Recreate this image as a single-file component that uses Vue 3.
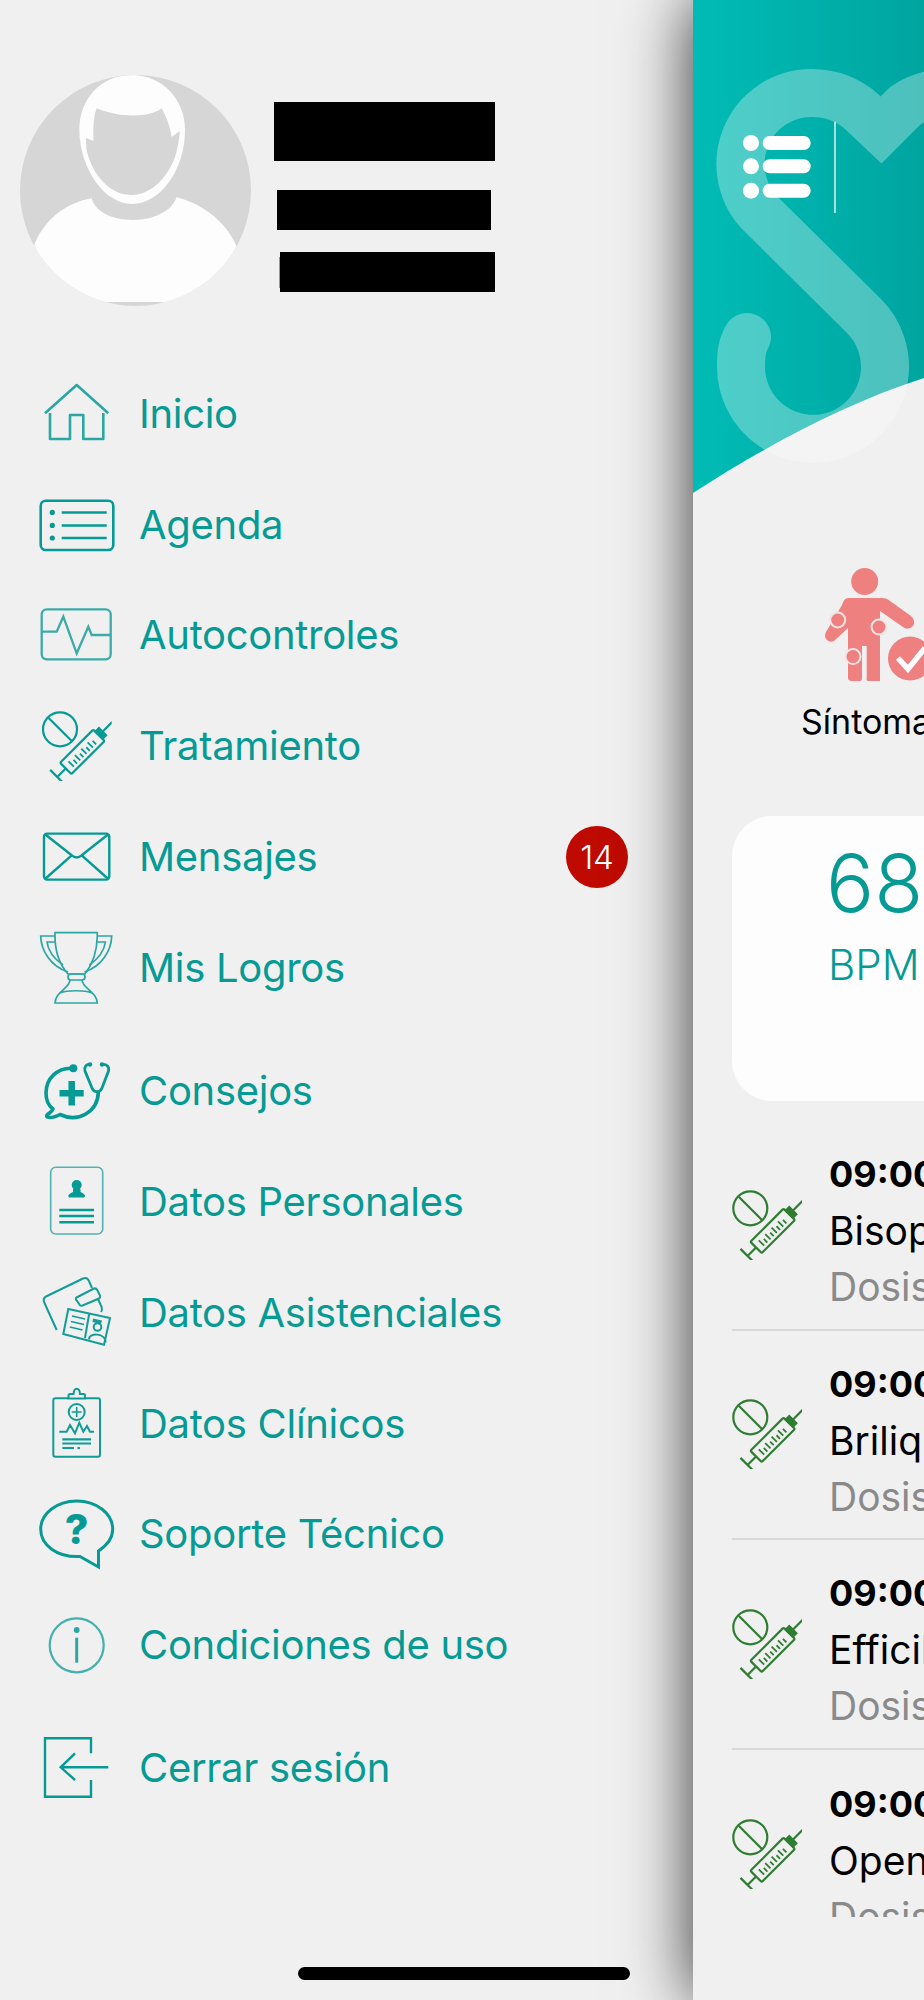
<script setup>
const menu = [
  { id: 'home', label: 'Inicio' },
  { id: 'agenda', label: 'Agenda' },
  { id: 'pulse', label: 'Autocontroles' },
  { id: 'syringe', label: 'Tratamiento' },
  { id: 'mail', label: 'Mensajes', badge: 14 },
  { id: 'trophy', label: 'Mis Logros' },
  { id: 'advice', label: 'Consejos', gap: true },
  { id: 'person', label: 'Datos Personales' },
  { id: 'wallet', label: 'Datos Asistenciales' },
  { id: 'clinic', label: 'Datos Clínicos' },
  { id: 'help', label: 'Soporte Técnico' },
  { id: 'info', label: 'Condiciones de uso' },
  { id: 'logout', label: 'Cerrar sesión', gap: true }
]
const meds = [
  { time: '09:00', name: 'Bisoprolol' },
  { time: '09:00', name: 'Brilique' },
  { time: '09:00', name: 'Efficib' },
  { time: '09:00', name: 'Openvas' }
]
</script>

<template>
  <svg class="defs" aria-hidden="true">
    <symbol id="i-syringe" viewBox="0 0 70 70">
      <g fill="none" stroke="currentColor" stroke-width="2.2">
        <circle cx="18.3" cy="18.3" r="17" />
        <path d="M6.7 6.7L30 30" />
        <g transform="translate(41 40.5) rotate(-45)">
          <rect x="-24" y="-8" width="47" height="16" rx="1.5" />
          <path d="M-24 0H-36M-36 -10V10M28 0H42" />
          <rect x="23" y="-5" width="5" height="10" fill="currentColor" />
          <path stroke-width="1.8" d="M-17 4.5V-3M-12.5 4.5V-0.5M-8 4.5V-3M-3.500 4.500V-0.500M1 4.5V-3M5.500 4.500V-0.500M10 4.5V-3M14.500 4.500V-0.500" />
        </g>
      </g>
    </symbol>
    <symbol id="i-home" viewBox="0 0 90 90">
      <path fill="none" stroke="#2ba7a3" stroke-width="2.600" stroke-linejoin="round" d="M13 45.300L44.700 17L76.300 45.300M18 45V71H38V47H51.300V71H71.300V45" />
    </symbol>
    <symbol id="i-agenda" viewBox="0 0 90 90">
      <rect x="8.700" y="21.700" width="72.600" height="49.300" rx="5" fill="none" stroke="#069a95" stroke-width="2.600" />
      <circle cx="20.300" cy="33.400" r="2.600" fill="#069a95" />
      <circle cx="20.300" cy="46.400" r="2.600" fill="#069a95" />
      <circle cx="20.300" cy="59" r="2.600" fill="#069a95" />
      <path stroke="#069a95" stroke-width="2.500" d="M29.700 33.400H74.700M29.700 46.400H74.700M29.700 59H74.700" />
    </symbol>
    <symbol id="i-pulse" viewBox="0 0 90 90">
      <g fill="none" stroke="#3aaba7" stroke-width="2.300">
        <rect x="9.700" y="19.300" width="69" height="50" rx="5" />
        <path d="M9.700 41.700H24.700L31.300 26.700L44.700 63.300L56.300 36.700L59.700 45H78.700" />
      </g>
    </symbol>
    <symbol id="i-mail" viewBox="0 0 90 90">
      <g fill="none" stroke="#069a95" stroke-width="2.400">
        <rect x="12" y="21.600" width="65.300" height="46" rx="3" />
        <path d="M13 22.300L39.700 43.300Q44.700 47.500 49.700 43.300L76.300 22.300M13 67L39.700 43.300M76.300 67L49.700 43.300" />
      </g>
    </symbol>
    <symbol id="i-trophy" viewBox="0 0 90 90">
      <g fill="none" stroke="#2ba7a3" stroke-width="1.700">
        <path d="M23 14V10.600H65.300V14C65 30 60 43 53 52H36C28 43 23 30 23 14Z" />
        <path d="M23 14H8.700C9 28 18 44 36 50M23 20H15C16 28 21 36 31 43" />
        <path d="M65.300 14H79.700C79.400 28 70.400 44 52.400 50M65.300 20H73.400C72.400 28 67.400 36 57.400 43" />
        <rect x="36" y="52" width="17" height="6" rx="3" />
        <path d="M38 58C38 66 23 70 23 81H65.300C65.300 70 50 66 50 58M28 71C35 68 53 68 60 71" />
      </g>
    </symbol>
    <symbol id="i-advice" viewBox="0 0 90 90">
      <g fill="none" stroke="#069a95">
        <path stroke-width="3.600" stroke-linejoin="round" d="M41.300 22.300C25 21 14 33 14 47C14 54 17 60 21 63C20 66 17 67 15 69C14 71 16 71.500 18 71.500C22 71.500 25 70 28 68.500C46 77 66 66 66.300 46" />
        <path stroke-width="2.800" d="M58 18.500C54 18 52 21 53 25L60 42C62 47 68 47 70 42L76.500 25C77.500 21 75 18 70 18.500" />
      </g>
      <circle cx="41.300" cy="22.300" r="4" fill="#069a95" />
      <circle cx="58" cy="18.500" r="2.200" fill="#069a95" />
      <circle cx="70" cy="18.500" r="2.200" fill="#069a95" />
      <path fill="none" stroke="#069a95" stroke-width="6.500" d="M39.700 35V59.500M27.500 47.300H51.700" />
    </symbol>
    <symbol id="i-person" viewBox="0 0 90 90">
      <rect x="18.700" y="11.300" width="52" height="66.700" rx="5" fill="none" stroke="#4fb3af" stroke-width="1.600" />
      <circle cx="44.700" cy="29" r="5" fill="#069a95" />
      <path fill="#069a95" d="M41 33H48.500V36C50.500 37 53 38 53 40C53 41 52 41.500 51 41.500H38.500C37 41.500 36.300 41 36.300 40C36.300 38 39 37 41 36Z" />
      <path stroke="#069a95" stroke-width="2.400" d="M27.300 54H62M27.300 60H62M27.300 66.300H62" />
    </symbol>
    <symbol id="i-wallet" viewBox="0 0 90 90">
      <g fill="none" stroke="#149d98" stroke-width="2">
        <path d="M24.700 63L12.500 36Q10.300 31.500 14 29.500L51 11.500Q55 10 57 14L60 21M66 32L69.700 40Q70.500 43 69 45" />
        <path d="M44.500 30.500L62 21.500Q64 21 65 22.500L68 28.500Q68.500 30.500 67 31.500L50 38.700Q48 39 47.500 37.500L44 32.500Q43.500 31 44.500 30.500Z" />
        <path d="M36.300 42L78 51L72 77.700L31.300 67ZM57.300 46L53 71" />
        <path stroke-width="1.700" d="M40 49L53 52M39 54.500L52 57.500M37.800 60L50.500 63" />
        <circle cx="65.500" cy="60" r="3.800" />
        <path d="M57 72.500C57 65 74 66 73.500 75.500" />
      </g>
      <path fill="#149d98" d="M61 51.500L70 53.500L69 57L60.500 55Z" />
    </symbol>
    <symbol id="i-clinic" viewBox="0 0 90 90">
      <g fill="none" stroke="#0f9c97" stroke-width="2">
        <path d="M36 20.300H23.500Q21.300 20.300 21.300 22.500V76.500Q21.300 78.700 23.500 78.700H66Q68 78.700 68 76.500V22.500Q68 20.300 66 20.300H53" />
        <path d="M36.500 20.500V17.500Q36.500 16 38 16H41.500C42 9 47.500 9 48 16H51.500Q53 16 53 17.500V20.500H36.500Z" />
        <circle cx="44.700" cy="34" r="8" />
        <path stroke-width="1.600" d="M39.700 34H49.700M44.700 29V39" />
        <path d="M27.300 53.700H34.700L38 47L43 55.300L47.300 44.700L51.300 53.700L55 48L58 53.700H62" />
        <path stroke-width="2.200" d="M30.300 61.300H59M30.300 65.500H59M30.300 70H42M45.500 70H48" />
      </g>
    </symbol>
    <symbol id="i-help" viewBox="0 0 90 90">
      <path fill="none" stroke="#069a95" stroke-width="3" d="M48 67.500L66.500 78V62C74 57 80.700 49 80.700 40.300C80.700 24.600 64.600 12 44.700 12C24.800 12 8.700 24.600 8.700 40.300C8.700 56 24.800 68.500 48 67.500Z" />
    </symbol>
    <symbol id="i-info" viewBox="0 0 90 90">
      <circle cx="44.700" cy="45.300" r="27" fill="none" stroke="#45b0ac" stroke-width="2.200" />
      <circle cx="44.700" cy="30" r="2.900" fill="#2ba7a3" />
      <path stroke="#2ba7a3" stroke-width="3" d="M44.700 37.700V62.700" />
    </symbol>
    <symbol id="i-logout" viewBox="0 0 90 90">
      <path fill="none" stroke="#069a95" stroke-width="2.400" d="M59 30.300V15.300H13V73.700H59V57M76.300 44.300H28.700M43 30.300L28.700 44.300L43 57" />
    </symbol>
  </svg>

  <div class="screen">
    <aside class="drawer">
      <header class="profile">
        <svg class="avatar" viewBox="0 0 231 231">
          <defs>
            <clipPath id="avatar-clip"><circle cx="115.500" cy="115.500" r="115.500" /></clipPath>
          </defs>
          <circle cx="115.500" cy="115.500" r="115.500" fill="#d6d6d6" />
          <g clip-path="url(#avatar-clip)">
            <path fill="#fdfdfd" d="M15 168C25 145 45 128 71.700 123.300C74 135 90 145 113 145C136 145 152 135 156.700 122.300C180 128 205 145 216 170L231 227H0Z" />
            <path fill="#fdfdfd" d="M111.700 0C80 0 59 25 59.300 55C60 95 85 129 112 129C140 129 165 95 165 55C165 25 143 0 111.700 0Z" />
            <path fill="#d6d6d6" d="M76.700 33.300C88 38 100 40.500 113 40.500C126 40.500 136 38 141.700 33.300C146 42 150 50 151.700 62L160 56C159 65 158 72 155 82C147 104 130 120 111.700 120C92 120 76 104 68.500 82C66 75 66 69 66 63L73.500 66C73 52 73.500 42 76.700 33.300Z" />
          </g>
        </svg>
        <div class="redacted">
          <div class="bar bar-one"></div>
          <div class="bar bar-two"></div>
          <div class="bar bar-three"></div>
        </div>
      </header>

      <nav class="menu">
        <div v-for="item in menu" :key="item.id" class="row" :class="{ spaced: item.gap }">
          <svg v-if="item.id === 'syringe'" class="icon syringe-tint" viewBox="0 0 90 90">
            <use href="#i-syringe" x="9.700" y="10" width="70" height="70" />
          </svg>
          <svg v-else class="icon" viewBox="0 0 90 90">
            <use :href="'#i-' + item.id" width="90" height="90" />
            <text v-if="item.id === 'help'" x="44.700" y="55" text-anchor="middle" font-family="Inter, sans-serif" font-weight="800" font-size="41" fill="#069a95">?</text>
          </svg>
          <span class="label">{{ item.label }}</span>
          <span v-if="item.badge" class="badge">{{ item.badge }}</span>
        </div>
      </nav>

      <div class="home-bar"></div>
    </aside>

    <main class="panel">
      <svg class="hero" viewBox="693 0 231 510">
        <defs>
          <linearGradient id="hero-fill" x1="0" y1="0" x2="1" y2="0">
            <stop offset="0" stop-color="#00bcb5" />
            <stop offset="1" stop-color="#00a5a0" />
          </linearGradient>
        </defs>
        <path fill="url(#hero-fill)" d="M693 0H924V378C840 405 760 450 693 493Z" />
        <path fill="none" stroke="#fff" stroke-opacity="0.3" stroke-width="48" stroke-linecap="round" stroke-linejoin="miter"
          d="M747 337C741 347 741 357 741 367A72 72 0 1 0 864 316L762 215A71 71 0 0 1 812 93C831 93 849 100 862 112L881 130L905 106C918 97 935 93 950 93" />
        <circle cx="751" cy="143" r="8" fill="#fff" />
        <circle cx="751" cy="166.300" r="8" fill="#fff" />
        <circle cx="751" cy="190.700" r="8" fill="#fff" />
        <path stroke="#fff" stroke-width="14" stroke-linecap="round" d="M769.700 143H803.700M769.700 166.300H803.700M769.700 190.700H803.700" />
        <path stroke="#fff" stroke-opacity="0.85" stroke-width="1.500" d="M835 121.700V213" />
      </svg>

      <section class="symptoms">
        <svg class="symptom-icon" viewBox="820 565 115 120">
          <g fill="#ee8080">
            <circle cx="864.700" cy="581.500" r="13.500" />
            <path d="M848 598H882Q887 598 890 601L911 616Q916 621 913 626Q908 631 903 627L880 611V681H868Q866 681 866.700 678V646H862V678Q862 681 860 681H852Q848 681 848 678V628L834 641Q829 643 826 639Q824 636 826 632L842 605Q844 598 848 598Z" />
            <circle cx="910" cy="658.500" r="22" />
          </g>
          <g fill="#ee8080" stroke="#f3e4e4" stroke-width="2">
            <circle cx="837.700" cy="620" r="7.500" />
            <circle cx="879" cy="627" r="7.500" />
            <circle cx="853" cy="656.600" r="7.500" />
          </g>
          <path fill="none" stroke="#fff" stroke-width="5.500" d="M898 658L908 669L925 648" />
        </svg>
        <span class="symptom-label">Síntomas</span>
      </section>

      <section class="card">
        <div class="bpm-value">68</div>
        <div class="bpm-unit">BPM</div>
      </section>

      <div class="list">
        <div v-for="(med, i) in meds" :key="i" class="med">
          <svg class="med-icon"><use href="#i-syringe" width="70" height="70" /></svg>
          <div class="med-text">
            <div class="med-time">{{ med.time }}</div>
            <div class="med-name">{{ med.name }}</div>
            <div class="med-dose">Dosis: 1</div>
          </div>
        </div>
      </div>
    </main>
  </div>
</template>

<style>
html, body { margin: 0; background: #f0f0f0; }
</style>

<style scoped>
.defs { position: absolute; width: 0; height: 0; }
.screen {
  display: flex;
  width: 924px;
  height: 2000px;
  overflow: hidden;
  background: #f0f0f0;
  font-family: Inter, "Liberation Sans", sans-serif;
}
.drawer {
  display: flex;
  flex-direction: column;
  flex: 0 0 693px;
  height: 2000px;
  box-sizing: border-box;
  padding-top: 75px;
}
.profile { display: flex; align-items: flex-start; padding-left: 20px; }
.avatar { display: block; width: 231px; height: 231px; flex: none; }
.redacted { display: flex; flex-direction: column; padding: 26.5px 0 0 22.5px; }
.bar { background: #000; position: relative; }
.bar-one { height: 59.5px; width: 221px; }
.bar-two { height: 40px; width: 214px; margin: 29px 0 0 3.5px; }
.bar-three { height: 40px; width: 214.5px; margin: 22px 0 0 6.5px; }
.bar-three::before {
  content: "";
  position: absolute;
  left: -1px;
  top: 5px;
  bottom: 4px;
  width: 1px;
  background: #4db8b4;
}
.menu { display: flex; flex-direction: column; margin-top: 52px; }
.row {
  display: flex;
  align-items: center;
  height: 110.800px;
  padding-left: 32px;
  padding-right: 65px;
}
.row.spaced { margin-top: 12.500px; }
.icon { display: block; width: 90px; height: 90px; flex: none; }
.syringe-tint { color: #069a95; }
.label {
  margin-left: 17px;
  font-size: 40px;
  letter-spacing: -0.3px;
  color: #069a95;
  white-space: nowrap;
}
.badge {
  margin-left: auto;
  display: flex;
  align-items: center;
  justify-content: center;
  width: 62px;
  height: 62px;
  border-radius: 50%;
  background: #be0a00;
  color: #fff;
  font-size: 33px;
  font-weight: 300;
}
.home-bar {
  margin: auto 0 20px 298px;
  width: 332px;
  height: 13px;
  border-radius: 7px;
  background: #000;
}
.panel {
  position: relative;
  z-index: 1;
  flex: 0 0 231px;
  height: 2000px;
  overflow: hidden;
  background: #f0f0f0;
  box-shadow: 0 0 64px rgba(0, 0, 0, 0.8);
}
.hero { display: block; width: 231px; height: 510px; }
.symptoms {
  display: flex;
  flex-direction: column;
  align-items: flex-start;
  margin: 55px 0 0 108px;
  width: 300px;
}
.symptom-icon { display: block; width: 115px; height: 120px; margin-left: 19px; }
.symptom-label {
  margin-top: 16px;
  font-size: 34px;
  line-height: 42px;
  color: #000;
  white-space: nowrap;
}
.card {
  box-sizing: border-box;
  width: 400px;
  height: 285px;
  margin: 73px 0 0 39px;
  padding: 19px 0 0 94px;
  border-radius: 40px;
  background: #fdfdfd;
  color: #069a95;
}
.bpm-value { font-size: 80px; line-height: 96px; font-weight: 350; }
.bpm-unit { font-size: 42px; line-height: 58px; font-weight: 350; padding: 5px 0 0 2px; }
.list {
  margin: 20px 0 0 39px;
  width: 500px;
  height: 795.500px;
  overflow: hidden;
}
.med {
  display: flex;
  align-items: center;
  box-sizing: border-box;
  height: 209.500px;
  border-bottom: 2px solid #d8d8d8;
}
.med:last-child { border-bottom: 0; }
.med-icon { display: block; width: 70px; height: 70px; flex: none; color: #2e7d32; }
.med-text { margin-left: 27px; padding-top: 11px; white-space: nowrap; }
.med-time { font-size: 36px; line-height: 58px; font-weight: 700; color: #000; }
.med-name { font-size: 39px; line-height: 56px; color: #000; }
.med-dose { font-size: 39px; line-height: 56px; color: #8a8a8a; }
</style>
